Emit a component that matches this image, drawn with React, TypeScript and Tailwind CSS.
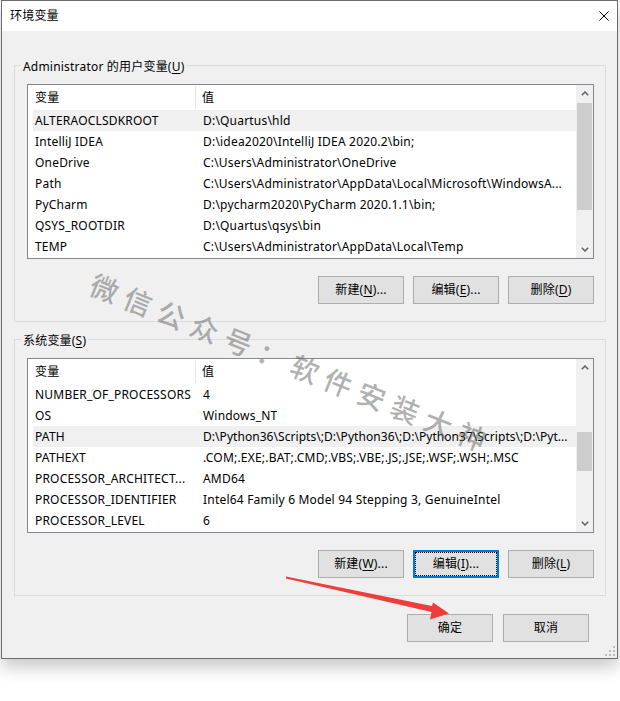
import React from "react";

type Row = [string, string];

const userVars: Row[] = [
  ["ALTERAOCLSDKROOT", "D:\\Quartus\\hld"],
  ["IntelliJ IDEA", "D:\\idea2020\\IntelliJ IDEA 2020.2\\bin;"],
  ["OneDrive", "C:\\Users\\Administrator\\OneDrive"],
  ["Path", "C:\\Users\\Administrator\\AppData\\Local\\Microsoft\\WindowsA..."],
  ["PyCharm", "D:\\pycharm2020\\PyCharm 2020.1.1\\bin;"],
  ["QSYS_ROOTDIR", "D:\\Quartus\\qsys\\bin"],
  ["TEMP", "C:\\Users\\Administrator\\AppData\\Local\\Temp"],
];

const sysVars: Row[] = [
  ["NUMBER_OF_PROCESSORS", "4"],
  ["OS", "Windows_NT"],
  ["PATH", "D:\\Python36\\Scripts\\;D:\\Python36\\;D:\\Python37\\Scripts\\;D:\\Pyt..."],
  ["PATHEXT", ".COM;.EXE;.BAT;.CMD;.VBS;.VBE;.JS;.JSE;.WSF;.WSH;.MSC"],
  ["PROCESSOR_ARCHITECT...", "AMD64"],
  ["PROCESSOR_IDENTIFIER", "Intel64 Family 6 Model 94 Stepping 3, GenuineIntel"],
  ["PROCESSOR_LEVEL", "6"],
];

function U({ children }: { children: React.ReactNode }) {
  return <span className="underline underline-offset-[2px]">{children}</span>;
}

function Chevron({ down }: { down?: boolean }) {
  return (
    <svg width="8" height="5" viewBox="0 0 8 5">
      <path
        d={down ? "M0.8 0.8 L4 4 L7.2 0.8" : "M0.8 4.2 L4 1 L7.2 4.2"}
        fill="none"
        stroke="#606060"
        strokeWidth="1.5"
      />
    </svg>
  );
}

function Scrollbar({ thumb }: { thumb: string }) {
  return (
    <div className="flex w-[17px] flex-col bg-[#f0f0f0]">
      <div className="flex h-[17px] items-center justify-center">
        <Chevron />
      </div>
      <div className="flex flex-1 flex-col">
        <div className={`mx-[1px] bg-[#cdcdcd] ${thumb}`} />
      </div>
      <div className="flex h-[17px] items-center justify-center">
        <Chevron down />
      </div>
    </div>
  );
}

function ListBox({ rows, sel, thumb }: { rows: Row[]; sel: number; thumb: string }) {
  return (
    <div className="flex h-[175px] w-[567px] border border-[#828790] bg-white">
      <div className="flex min-w-0 flex-1 flex-col">
        <div className="flex h-[25px] items-center pl-[5px]">
          <div className="flex h-[23px] w-[163px] items-center border-r border-[#e5e5e5] pl-[2px]">变量</div>
          <div className="pl-[6px]">值</div>
        </div>
        {rows.map(([k, v], i) => (
          <div
            key={k}
            className={`ml-[5px] flex h-[21px] items-center ${i === sel ? "bg-[#f0f0f0]" : ""}`}
          >
            <div className="w-[168px] shrink-0 overflow-hidden whitespace-nowrap pl-[2px]">{k}</div>
            <div
              className={`overflow-hidden whitespace-nowrap pl-[2px] ${
                v.length > 60 ? "tracking-[0.05px]" : ""
              }`}
            >
              {v}
            </div>
          </div>
        ))}
      </div>
      <Scrollbar thumb={thumb} />
    </div>
  );
}

function Btn({ children, focus }: { children: React.ReactNode; focus?: boolean }) {
  if (focus) {
    return (
      <div className="flex h-[28px] w-[86px] border-2 border-[#0078d7] bg-[#e1e1e1]">
        <div className="flex flex-1 items-center justify-center border border-dotted border-black">
          {children}
        </div>
      </div>
    );
  }
  return (
    <div className="flex h-[28px] w-[86px] items-center justify-center border border-[#adadad] bg-[#e1e1e1]">
      {children}
    </div>
  );
}

function Group({
  label,
  rows,
  sel,
  thumb,
  buttons,
  className,
}: {
  label: React.ReactNode;
  rows: Row[];
  sel: number;
  thumb: string;
  buttons: React.ReactNode;
  className?: string;
}) {
  return (
    <div className={`relative h-[257px] border border-[#dcdcdc] pl-[12px] pr-[11px] pt-[18px] ${className ?? ""}`}>
      <div className="absolute -top-[7px] left-[6px] bg-[#f0f0f0] px-[2px] leading-[16px]">{label}</div>
      <ListBox rows={rows} sel={sel} thumb={thumb} />
      <div className="mt-[17px] flex justify-end gap-[9px]">{buttons}</div>
    </div>
  );
}

export default function App() {
  return (
    <div className="relative h-[701px] w-[620px] overflow-hidden bg-white font-['Noto_Sans','Noto_Sans_CJK_SC',sans-serif] text-[12px] tracking-[0.2px] text-black">
      <div className="ml-[1px] flex h-[659px] w-[617px] flex-col border border-[#6b6b6b] shadow-[0_8px_16px_rgba(0,0,0,0.22)]">
        <div className="flex h-[30px] items-center justify-between bg-white pl-[8px] pr-[8px]">
          <span>环境变量</span>
          <svg width="10" height="10" viewBox="0 0 10 10">
            <path d="M0.5 0.5 L9.5 9.5 M9.5 0.5 L0.5 9.5" stroke="#000" strokeWidth="1" />
          </svg>
        </div>
        <div className="relative flex flex-1 flex-col bg-[#f0f0f0] pl-[12px] pr-[11px] pt-[34px]">
          <Group
            label={
              <>
                Administrator 的用户变量(<U>U</U>)
              </>
            }
            rows={userVars}
            sel={0}
            thumb="mt-[1px] h-[107px]"
            buttons={
              <>
                <Btn>
                  <span>
                    新建(<U>N</U>)...
                  </span>
                </Btn>
                <Btn>
                  <span>
                    编辑(<U>E</U>)...
                  </span>
                </Btn>
                <Btn>
                  <span>
                    删除(<U>D</U>)
                  </span>
                </Btn>
              </>
            }
          />
          <Group
            className="mt-[17px]"
            label={
              <>
                系统变量(<U>S</U>)
              </>
            }
            rows={sysVars}
            sel={2}
            thumb="mt-[56px] h-[39px]"
            buttons={
              <>
                <Btn>
                  <span>
                    新建(<U>W</U>)...
                  </span>
                </Btn>
                <Btn focus>
                  <span>
                    编辑(<U>I</U>)...
                  </span>
                </Btn>
                <Btn>
                  <span>
                    删除(<U>L</U>)
                  </span>
                </Btn>
              </>
            }
          />
          <div className="mt-[18px] flex justify-end gap-[10px] pr-[17px]">
            <Btn>确定</Btn>
            <Btn>取消</Btn>
          </div>
          <svg className="absolute bottom-[2px] right-[2px]" width="10" height="10" viewBox="0 0 10 10">
            <rect x="8" y="0" width="2" height="2" fill="#bcbcbc" />
            <rect x="4" y="4" width="2" height="2" fill="#bcbcbc" />
            <rect x="8" y="4" width="2" height="2" fill="#bcbcbc" />
            <rect x="0" y="8" width="2" height="2" fill="#bcbcbc" />
            <rect x="4" y="8" width="2" height="2" fill="#bcbcbc" />
            <rect x="8" y="8" width="2" height="2" fill="#bcbcbc" />
          </svg>
        </div>
      </div>

      <div className="pointer-events-none absolute left-[92px] top-[268px] origin-left rotate-[22deg] whitespace-nowrap font-['Noto_Sans_CJK_SC',sans-serif] text-[28px] font-medium leading-[28px] tracking-[8px] text-[rgba(100,100,100,0.5)]">
        微信公众号：软件安装大神
      </div>

      <svg className="pointer-events-none absolute left-0 top-0" width="620" height="701" viewBox="0 0 620 701">
        <polygon
          points="286,576.5 432,606 433,602.5 449,613.5 430,619.5 431.5,612 286,578.5"
          fill="#ef3d3a"
        />
      </svg>
    </div>
  );
}
